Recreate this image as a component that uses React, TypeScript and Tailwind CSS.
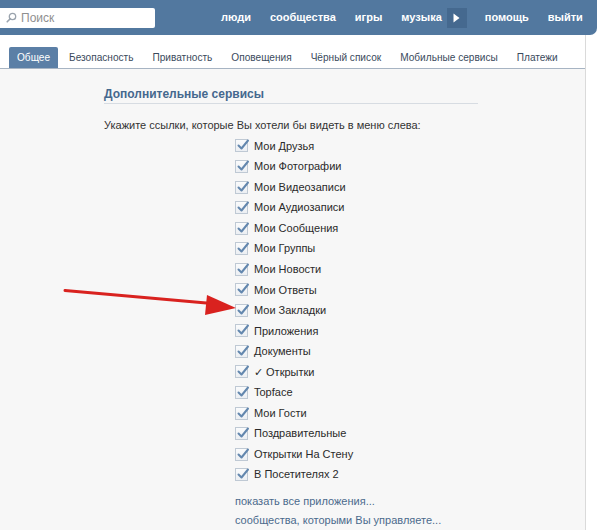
import React from "react"

const tabs = ["Общее", "Безопасность", "Приватность", "Оповещения", "Чёрный список", "Мобильные сервисы", "Платежи"]

const navItems = ["люди", "сообщества", "игры", "музыка"]

const services = [
  "Мои Друзья",
  "Мои Фотографии",
  "Мои Видеозаписи",
  "Мои Аудиозаписи",
  "Мои Сообщения",
  "Мои Группы",
  "Мои Новости",
  "Мои Ответы",
  "Мои Закладки",
  "Приложения",
  "Документы",
  "✓ Открытки",
  "Topface",
  "Мои Гости",
  "Поздравительные",
  "Открытки На Стену",
  "В Посетителях 2",
]

function CheckBox() {
  return (
    <span className="relative mr-[6px] flex h-[13px] w-[13px] shrink-0 items-center justify-center border border-[#bfc9d4] bg-gradient-to-b from-[#fafbfc] to-[#eceff3]">
      <svg width="13" height="12" viewBox="0 0 13 12" className="absolute left-[1px] top-[-1px]">
        <path d="M1.5 6.5 L4.5 9.5 L11 1.5" fill="none" stroke="#6387ae" strokeWidth="2" strokeLinecap="round" strokeLinejoin="round" />
      </svg>
    </span>
  )
}

export default function App() {
  return (
    <div className="relative h-[530px] w-[600px] overflow-hidden bg-white text-[11px] text-[#333]" style={{ fontFamily: '"Liberation Sans", Arial, sans-serif' }}>
      <header className="flex h-[35px] w-[597px] items-center whitespace-nowrap rounded-br-[7px] bg-[#52789f]">
        <div className="flex h-[20px] w-[155px] items-center rounded-r-[2px] bg-white pl-[6px] text-[12px] text-[#8f8f8f]">
          <svg width="11" height="11" viewBox="0 0 11 11" className="mr-[4px]">
            <circle cx="6.5" cy="4.5" r="3.2" fill="none" stroke="#9aa3ad" strokeWidth="1.3" />
            <path d="M4.2 6.8 L1.2 9.8" stroke="#9aa3ad" strokeWidth="1.6" strokeLinecap="round" />
          </svg>
          Поиск
        </div>
        <nav className="ml-[66px] flex items-center gap-[19px] text-[11px] font-bold text-white">
          {navItems.map((item) => (
            <span key={item}>{item}</span>
          ))}
        </nav>
        <span className="ml-[5px] flex h-[20px] w-[20px] items-center justify-center bg-[#45698f]">
          <svg width="7" height="10" viewBox="0 0 7 10">
            <path d="M0.5 0.5 L6.5 5 L0.5 9.5 Z" fill="#ffffff" />
          </svg>
        </span>
        <span className="ml-[18px] text-[11px] font-bold text-white">помощь</span>
        <span className="ml-[19px] text-[11px] font-bold text-white">выйти</span>
      </header>

      <div className="flex h-[495px] w-[586px] flex-col border-r border-[#dadada]">
        <div className="flex h-[34px] items-end gap-[3px] whitespace-nowrap border-b border-[#a7b4c3] bg-white pl-[9px]">
          {tabs.map((tab, index) => (
            <span
              key={tab}
              className={`flex h-[21px] items-center px-[8px] text-[10.1px] ${index === 0 ? "rounded-t-[2px] bg-[#5b7fa6] text-white" : "text-[#3a4a5c]"}`}
            >
              {tab}
            </span>
          ))}
        </div>

        <div className="flex-1 bg-[#f7f7f7] pl-[104px] pt-[17px]">
          <div className="w-[374px]">
            <h2 className="h-[18px] border-b border-[#d7dce2] text-[12px] font-bold leading-[16px] text-[#45688e]">Дополнительные сервисы</h2>
            <p className="mt-[14px] leading-[14px] text-[#333]">Укажите ссылки, которые Вы хотели бы видеть в меню слева:</p>
            <ul className="ml-[131px] mt-[4px]">
              {services.map((item) => (
                <li key={item} className="flex h-[20.56px] items-center text-[#2a2a2a]">
                  <CheckBox />
                  {item}
                </li>
              ))}
            </ul>
            <div className="ml-[131px] mt-[7px] text-[#4b6a8c]">
              <p className="h-[19px] leading-[19px]">показать все приложения...</p>
              <p className="h-[19px] leading-[19px]">сообщества, которыми Вы управляете...</p>
            </div>
          </div>
        </div>
      </div>

      <svg width="600" height="530" className="pointer-events-none absolute left-0 top-0">
        <path d="M65 290.5 L212 303.5" stroke="#d9221f" strokeWidth="3" strokeLinecap="round" />
        <path d="M236 308 L207 295 L205 315 Z" fill="#d9221f" />
      </svg>
    </div>
  )
}
